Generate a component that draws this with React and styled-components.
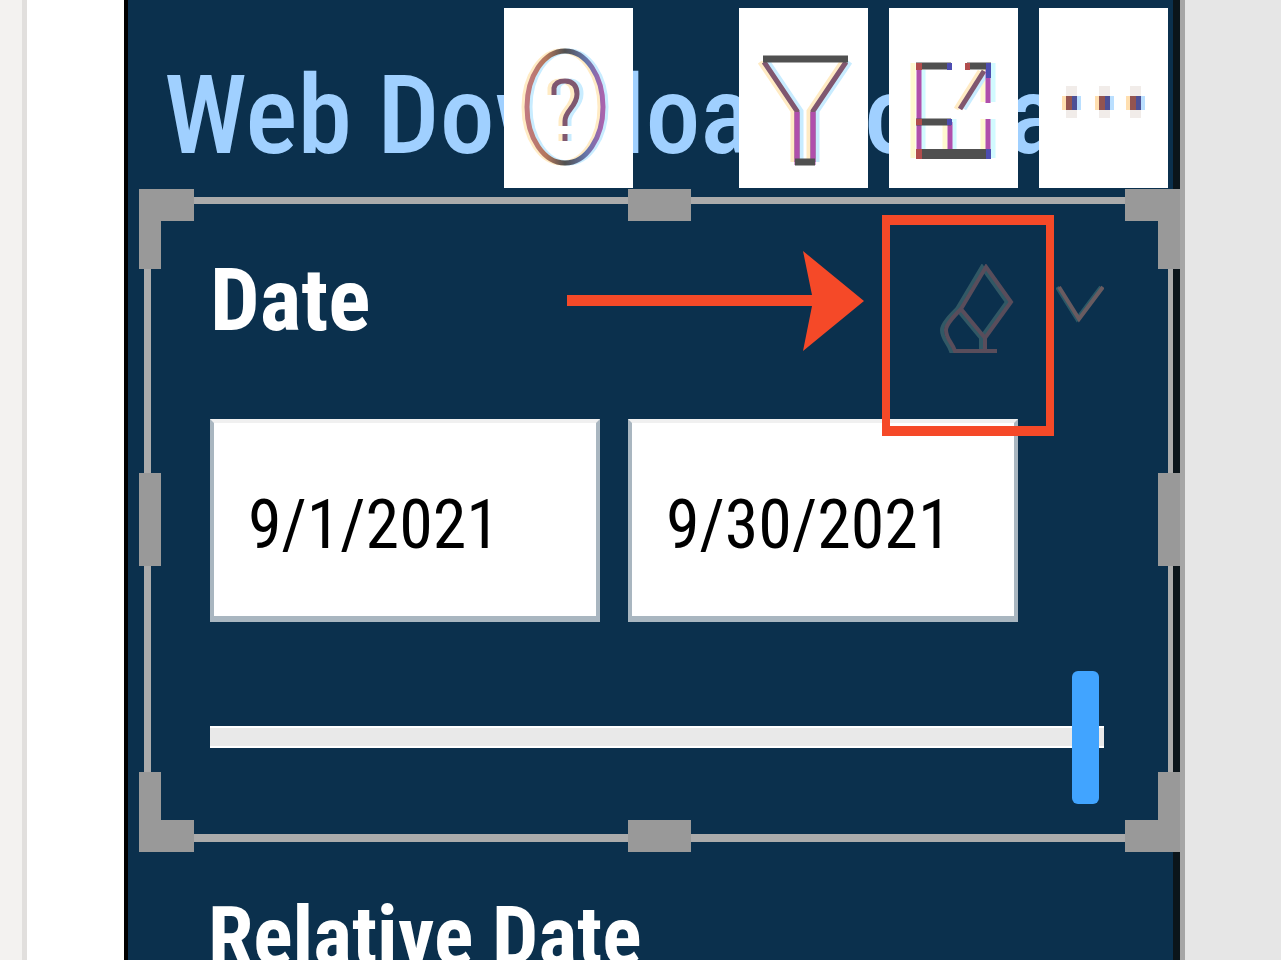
import React from "react";
import styled, { createGlobalStyle } from "styled-components";

const GlobalStyle = createGlobalStyle`
  *, *::before, *::after { box-sizing: border-box; }
  body {
    margin: 0;
    background: #e6e6e6;
    font-family: "Roboto Condensed", "Open Sans", sans-serif;
  }
`;

const Workspace = styled.div`
  display: flex;
  height: 100vh;
  overflow: hidden;
  background: #e6e6e6;
`;

const Rail = styled.aside`
  flex: none;
  width: 27px;
  background: #f3f2f0;
  border-right: 5px solid #e1dfdd;
`;

const Canvas = styled.main`
  flex: 1;
  min-width: 0;
  padding-left: 97px;
  background: #fff;
  border-right: 5px solid #a6a6a6;
`;

const Outside = styled.div`
  flex: none;
  width: 96px;
`;

const Report = styled.section`
  min-height: 100%;
  background: #0b304d;
  border-left: 4px solid #000;
  border-right: 7px solid #0b151b;
`;

const ReportHeader = styled.header`
  position: relative;
  height: 197px;
  padding: 50px 0 0 36px;
  overflow: hidden;
`;

const ReportTitle = styled.h1`
  margin: 0;
  font-size: 110px;
  line-height: 132px;
  font-weight: 500;
  color: #a0d0ff;
  white-space: nowrap;
`;

const Toolbar = styled.div`
  position: absolute;
  top: 8px;
  right: 5px;
  display: flex;
  gap: 21px;
`;

const ToolButton = styled.button`
  display: block;
  width: 129px;
  height: 180px;
  padding: 0;
  border: 0;
  background: #fff;
  margin-right: ${(p) => (p.$apart ? "85px" : "0")};
`;

const Glyph = styled.svg`
  display: block;
  fill: none;
`;

const Slicer = styled.section`
  position: relative;
  margin-left: 16px;
  padding: 40px 64px 31px 59px;
  border: 7px solid #ababab;
  border-right-width: 5px;
  border-bottom-width: 8px;
`;

const Corner = styled.span`
  position: absolute;
  width: 55px;
  height: 80px;
  border: 0 solid #999;
  ${(p) => (p.$bottom ? "bottom: -18px; border-bottom-width: 32px;" : "top: -15px; border-top-width: 32px;")}
  ${(p) => (p.$right ? "right: -12px; border-right-width: 22px;" : "left: -12px; border-left-width: 22px;")}
`;

const EdgeHandle = styled.span`
  position: absolute;
  left: calc(50% - 32px);
  width: 63px;
  height: 32px;
  background: #999;
  ${(p) => (p.$bottom ? "bottom: -18px;" : "top: -15px;")}
`;

const SideHandle = styled.span`
  position: absolute;
  top: calc(50% - 46px);
  width: 22px;
  height: 93px;
  background: #999;
  ${(p) => (p.$right ? "right: -12px;" : "left: -12px;")}
`;

const SlicerHeader = styled.div`
  display: flex;
  align-items: flex-start;
  height: 112px;
  margin-bottom: 63px;
`;

const FieldName = styled.h2`
  flex: 1;
  margin: 0;
  font-size: ${(p) => (p.$long ? "82px" : "88px")};
  line-height: 112px;
  font-weight: 700;
  color: #fff;
`;

const IconButton = styled.button`
  display: block;
  padding: 0;
  border: 0;
  background: none;
`;

const HeaderIcons = styled.div`
  display: flex;
  align-items: center;
  gap: 40px;
  padding-top: 20px;
`;

const DateRow = styled.div`
  display: flex;
  gap: 28px;
  padding-right: 86px;
`;

const DateInput = styled.input`
  flex: 1;
  min-width: 0;
  height: 203px;
  padding: 10px 34px 0;
  border: 4px solid #f0f0f0;
  border-left-color: #a9b6c0;
  border-right-color: #a9b6c0;
  border-bottom: 6px solid #a9b6c0;
  border-radius: 0;
  background: #fff;
  color: #000;
  font-family: inherit;
  font-size: 68px;
`;

const RangeSlider = styled.input`
  appearance: none;
  display: block;
  width: 100%;
  height: 133px;
  margin: 48px 0 0;
  background: none;

  &::-webkit-slider-runnable-track {
    height: 22px;
    background: #e9e9e9;
    border-top: 2px solid #fff;
    border-bottom: 2px solid #fff;
  }

  &::-webkit-slider-thumb {
    appearance: none;
    width: 27px;
    height: 133px;
    margin-top: -57px;
    border-radius: 6px;
    background: #41a4ff;
  }
`;

const NextSlicer = styled.section`
  padding: 38px 0 0 80px;
`;

const Callout = styled.div`
  position: absolute;
  top: 11px;
  right: 114px;
  width: 172px;
  height: 221px;
  border: 8px solid #f54928;
  border-top-width: 10px;
  border-bottom-width: 10px;
  pointer-events: none;
`;

const CalloutArrow = styled.svg`
  position: absolute;
  top: 46px;
  right: 303px;
  display: block;
  pointer-events: none;
`;

/* Subpixel-antialiased stroke: warm edge at left, cool edge at right. */
function Fringed({ children }) {
  return (
    <>
      <g stroke="#ffebc4" strokeWidth="5" transform="translate(-4 0)">{children}</g>
      <g stroke="#c8ecff" strokeWidth="5" transform="translate(4 0)">{children}</g>
      <g stroke="#80576f" strokeWidth="5">{children}</g>
    </>
  );
}

function HelpIcon() {
  return (
    <Glyph width="129" height="180" viewBox="0 0 129 180">
      <defs>
        <linearGradient id="ring" x1="0" x2="1" y1="0" y2="0">
          <stop offset="0" stopColor="#c07a80" />
          <stop offset="0.25" stopColor="#b4775c" />
          <stop offset="0.5" stopColor="#505050" />
          <stop offset="0.78" stopColor="#6676ac" />
          <stop offset="1" stopColor="#a964ad" />
        </linearGradient>
      </defs>
      <ellipse cx="58" cy="99" rx="38" ry="56" stroke="#ffebc4" strokeWidth="5" />
      <ellipse cx="64" cy="99" rx="38" ry="56" stroke="#c8ecff" strokeWidth="5" />
      <ellipse cx="61" cy="99" rx="38" ry="56" stroke="url(#ring)" strokeWidth="5" />
      <Fringed>
        <path d="M50 87V80C51 75 55 73 61 73C69 73 73 78 73 86C73 99 61 102 61 113V118M61 126V133" />
      </Fringed>
    </Glyph>
  );
}

function FilterIcon() {
  return (
    <Glyph width="129" height="180" viewBox="0 0 129 180">
      <Fringed>
        <path d="M25 54L58 103V154M107 54L74 103V154" />
      </Fringed>
      <path d="M58 104V157M74 104V157" stroke="#b04fac" strokeWidth="5" />
      <path d="M24 51H109M56 154H76" stroke="#505050" strokeWidth="7" />
    </Glyph>
  );
}

function FocusIcon() {
  return (
    <Glyph width="129" height="180" viewBox="0 0 129 180">
      <path d="M24 55V150M56 114V141M94 55V94M94 111V150" stroke="#fff9cf" strokeWidth="5" />
      <path d="M34 62V141M65 111V141M104 55V94M104 111V150" stroke="#d2faff" strokeWidth="5" />
      <Fringed>
        <path d="M71 101L95 63" />
      </Fringed>
      <path d="M30 55V150M61 114V141M99 55V95M99 111V150" stroke="#b04fac" strokeWidth="5" />
      <path d="M27 58H62M78 58H102M27 114H62" stroke="#505050" strokeWidth="7" />
      <path d="M27 146H102" stroke="#505050" strokeWidth="10" />
      <path d="M27 55H33V62H27ZM76 55H81V62H76ZM27 111H33V117H27ZM27 141H33V151H27Z" fill="#b14d4d" />
      <path d="M58 55H63V62H58ZM97 55H102V70H97ZM58 111H63V117H58ZM97 141H102V151H97Z" fill="#4d4db1" />
    </Glyph>
  );
}

function MoreIcon() {
  return (
    <Glyph width="129" height="180" viewBox="0 0 129 180">
      {[32, 65, 96].map((x) => (
        <g key={x}>
          <path d={`M${x - 5} 78h11v32h-11Z`} fill="#f1ece9" />
          <path d={`M${x - 9} 88h4v14h-4Z`} fill="#ffdfb0" />
          <path d={`M${x + 6} 88h4v14h-4Z`} fill="#badfff" />
          <path d={`M${x - 5} 88h6v14h-6Z`} fill="#935450" />
          <path d={`M${x + 1} 88h5v14h-5Z`} fill="#4d5096" />
        </g>
      ))}
    </Glyph>
  );
}

function EraserIcon() {
  const outline = (
    <>
      <path d="M44 3L69 38L43 74L19 45ZM19 45C12 52 4 60 4 66C4 75 10 78 13 87H55" />
      <path d="M43 74V87" />
    </>
  );
  return (
    <Glyph width="76" height="92" viewBox="0 0 76 92" strokeWidth="4">
      <g stroke="#315865" transform="translate(-2 0)">{outline}</g>
      <g stroke="#594d5b" transform="translate(2 0)">{outline}</g>
    </Glyph>
  );
}

function ChevronIcon() {
  return (
    <Glyph width="48" height="52" viewBox="0 0 48 52" strokeWidth="4">
      <path d="M1 3L21 35L45 3" stroke="#2b5967" />
      <path d="M3 3L23 35L47 3" stroke="#695b60" />
    </Glyph>
  );
}

export default function App() {
  return (
    <>
      <GlobalStyle />
      <Workspace>
        <Rail />
        <Canvas>
          <Report>
            <ReportHeader>
              <ReportTitle>Web Download to Data</ReportTitle>
              <Toolbar>
                <ToolButton $apart aria-label="Help"><HelpIcon /></ToolButton>
                <ToolButton aria-label="Filters"><FilterIcon /></ToolButton>
                <ToolButton aria-label="Focus mode"><FocusIcon /></ToolButton>
                <ToolButton aria-label="More options"><MoreIcon /></ToolButton>
              </Toolbar>
            </ReportHeader>

            <Slicer>
              <SlicerHeader>
                <FieldName>Date</FieldName>
                <HeaderIcons>
                  <IconButton aria-label="Clear selections"><EraserIcon /></IconButton>
                  <IconButton aria-label="Slicer type"><ChevronIcon /></IconButton>
                </HeaderIcons>
              </SlicerHeader>
              <DateRow>
                <DateInput aria-label="Start date" defaultValue="9/1/2021" />
                <DateInput aria-label="End date" defaultValue="9/30/2021" />
              </DateRow>
              <RangeSlider type="range" aria-label="Date range" min="0" max="1000" defaultValue="994" />

              <Corner />
              <Corner $right />
              <Corner $bottom />
              <Corner $bottom $right />
              <EdgeHandle />
              <EdgeHandle $bottom />
              <SideHandle />
              <SideHandle $right />

              <CalloutArrow width="299" height="102" viewBox="0 0 299 102" fill="#f54928">
                <path d="M1 45H246L237 1L298 51L237 101L246 56H1Z" />
              </CalloutArrow>
              <Callout />
            </Slicer>

            <NextSlicer>
              <FieldName $long>Relative Date</FieldName>
            </NextSlicer>
          </Report>
        </Canvas>
        <Outside />
      </Workspace>
    </>
  );
}
